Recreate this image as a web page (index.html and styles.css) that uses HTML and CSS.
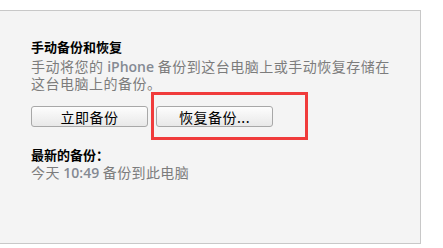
FILE: index.html
```html
<!DOCTYPE html>
<html lang="zh-CN">
<head>
<meta charset="utf-8">
<link rel="stylesheet" href="styles.css">
</head>
<body>
<div class="panel">
  <h2 class="title">手动备份和恢复</h2>
  <p class="desc">手动将您的 <span class="latin">iPhone</span> 备份到这台电脑上或手动恢复存储在这台电脑上的备份。</p>
  <div class="buttons">
    <button class="btn">立即备份</button>
    <button class="btn">恢复备份...</button>
  </div>
  <h3 class="subtitle">最新的备份：</h3>
  <p class="latest">今天 <span class="latin">10:49</span> 备份到此电脑</p>
  <div class="highlight"></div>
</div>
</body>
</html>
```

FILE: styles.css
```css
html, body {
  margin: 0;
  padding: 0;
  background: #ffffff;
}
body {
  font-family: "Noto Sans CJK SC", "Noto Sans", sans-serif;
}
.panel {
  position: relative;
  box-sizing: border-box;
  margin-top: 10px;
  width: 421px;
  height: 234px;
  background: #f4f4f4;
  border: 1px solid #c8c8c8;
  border-left: none;
  padding: 27px 0 0 31px;
}
.title {
  margin: 0;
  font-size: 13px;
  line-height: 17px;
  font-weight: bold;
  color: #000;
}
.desc {
  margin: 3px 0 0 0;
  width: 362px;
  font-size: 14px;
  line-height: 17px;
  letter-spacing: 0.5px;
  color: #7c7c7c;
}
.latin {
  font-family: "Open Sans", "Noto Sans", sans-serif;
  font-weight: 600;
  letter-spacing: 0;
  color: #858a93;
}
.buttons {
  display: flex;
  gap: 8px;
  margin-top: 14px;
}
.btn {
  box-sizing: border-box;
  width: 117px;
  height: 21px;
  padding: 0;
  border: 1px solid #a8a8a8;
  border-radius: 3px;
  background: linear-gradient(#fdfdfd, #e8e8e8);
  font-family: "Noto Sans CJK SC", sans-serif;
  font-size: 14px;
  line-height: 18px;
  color: #000;
  letter-spacing: 0.5px;
}
.subtitle {
  margin: 19px 0 0 0;
  font-size: 13px;
  line-height: 17px;
  font-weight: bold;
  color: #000;
}
.latest {
  margin: 1px 0 0 0;
  font-size: 14px;
  line-height: 17px;
  letter-spacing: 0.4px;
  color: #7c7c7c;
}
.highlight {
  position: absolute;
  left: 151px;
  top: 81px;
  width: 157px;
  height: 48px;
  box-sizing: border-box;
  border: 3px solid #f03b3b;
}
```
